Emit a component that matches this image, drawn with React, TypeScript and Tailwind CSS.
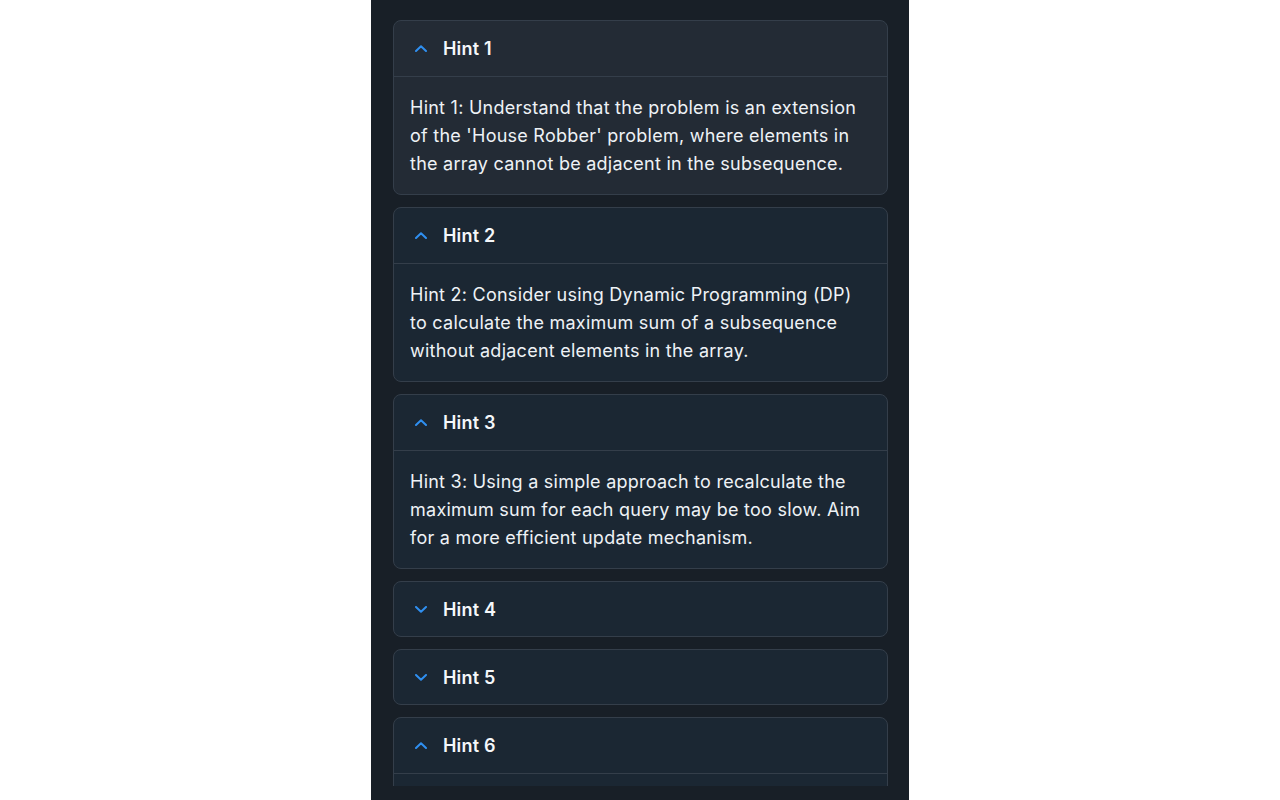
import * as React from "react";

interface Hint {
  title: string;
  body: string;
  open: boolean;
}

const hints: Hint[] = [
  {
    title: "Hint 1",
    body: "Hint 1: Understand that the problem is an extension of the 'House Robber' problem, where elements in the array cannot be adjacent in the subsequence.",
    open: true,
  },
  {
    title: "Hint 2",
    body: "Hint 2: Consider using Dynamic Programming (DP) to calculate the maximum sum of a subsequence without adjacent elements in the array.",
    open: true,
  },
  {
    title: "Hint 3",
    body: "Hint 3: Using a simple approach to recalculate the maximum sum for each query may be too slow. Aim for a more efficient update mechanism.",
    open: true,
  },
  { title: "Hint 4", body: "", open: false },
  { title: "Hint 5", body: "", open: false },
  {
    title: "Hint 6",
    body: "Hint 6: Use a segment tree where each node stores the best sums for its range, depending on whether its endpoints are taken.",
    open: true,
  },
];

const Chevron = ({ up }: { up: boolean }) => (
  <svg width="12" height="7" viewBox="0 0 12 7" fill="none" className="shrink-0">
    <path
      d={up ? "M1 6 6 1.2 11 6" : "M1 1 6 5.8 11 1"}
      stroke="#2f8ff0"
      strokeWidth="2"
      strokeLinecap="round"
      strokeLinejoin="round"
    />
  </svg>
);

const HintCard = ({ hint, active }: { hint: Hint; active: boolean }) => (
  <div
    className={`shrink-0 rounded-lg border border-[#343e4a] ${
      active ? "bg-[#232b35]" : "bg-[#1b2733]"
    }`}
  >
    <button
      className={`flex w-full items-center gap-4 pl-[21px] text-left ${
        hint.open ? "h-[55px]" : "h-[54px]"
      }`}
    >
      <Chevron up={hint.open} />
      <span className="text-[18px] font-semibold tracking-[0.2px] text-[#f5f7fa]">
        {hint.title}
      </span>
    </button>
    {hint.open && (
      <div className="border-t border-[#343e4a] px-4 pt-[17px] pb-4 text-[18px] leading-7 tracking-[0.25px] text-[#eef2f6]">
        {hint.body}
      </div>
    )}
  </div>
);

const App: React.FunctionComponent = () => {
  return (
    <div
      className="flex min-h-[800px] justify-center bg-white"
      style={{ fontFamily: "Inter, 'Noto Sans', sans-serif" }}
    >
      <div className="h-[800px] w-[538px] bg-[#181f27]">
        <div className="flex h-[786px] flex-col gap-3 overflow-hidden pl-[22px] pr-[21px] pt-5">
          {hints.map((hint, i) => (
            <HintCard hint={hint} active={i === 0} key={hint.title} />
          ))}
        </div>
      </div>
    </div>
  );
};

export default App;
